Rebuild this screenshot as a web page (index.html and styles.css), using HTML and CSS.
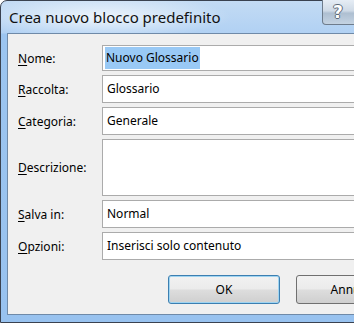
FILE: index.html
```html
<!DOCTYPE html>
<html lang="it">
<head>
    <meta charset="UTF-8" />
    <title>Crea nuovo blocco predefinito</title>
    <link rel="stylesheet" href="styles.css">
</head>
<body>

<div class="window">
    <div class="titlebar">
        <span class="title">Crea nuovo blocco predefinito</span>
        <span class="help-btn">?</span>
    </div>

    <div class="client">
        <div class="form-row">
            <label for="nome"><u>N</u>ome:</label>
            <div class="field field-short" id="nome"><span class="selected">Nuovo Glossario</span></div>
        </div>
        <div class="form-row">
            <label for="raccolta"><u>R</u>accolta:</label>
            <div class="field" id="raccolta">Glossario</div>
        </div>
        <div class="form-row">
            <label for="categoria"><u>C</u>ategoria:</label>
            <div class="field" id="categoria">Generale</div>
        </div>
        <div class="form-row">
            <label for="descrizione"><u>D</u>escrizione:</label>
            <div class="field field-tall" id="descrizione"></div>
        </div>
        <div class="form-row">
            <label for="salva"><u>S</u>alva in:</label>
            <div class="field" id="salva">Normal</div>
        </div>
        <div class="form-row">
            <label for="opzioni"><u>O</u>pzioni:</label>
            <div class="field" id="opzioni">Inserisci solo contenuto</div>
        </div>

        <div class="buttons">
            <button class="btn btn-default">OK</button>
            <button class="btn">Annulla</button>
        </div>
    </div>
</div>

</body>
</html>
```

FILE: styles.css
```css
body {
    margin: 0;
    width: 354px;
    height: 323px;
    overflow: hidden;
    font-family: 'Noto Sans', 'Open Sans', sans-serif;
    color: #000;
}
.window {
    width: 430px;
    height: 321px;
    border: 1px solid #3a4250;
    border-radius: 7px 7px 0 0;
    background:
        radial-gradient(ellipse 130px 22px at 100px 16px, rgba(255,255,255,0.75), rgba(255,255,255,0) 100%),
        linear-gradient(to bottom, #c3dbf4 0px, #b1d1f3 32px, #9cc5f0 33px, #98c2ef 100%);
    display: flex;
    flex-direction: column;
}
.titlebar {
    height: 32px;
    display: flex;
    align-items: flex-start;
}
.title {
    width: 313px;
    padding-left: 8px;
    padding-top: 6px;
    font-size: 15px;
    color: #111;
}
.help-btn {
    width: 40px;
    height: 24px;
    margin-top: -1px;
    border: 1px solid #6e7c8c;
    border-top: none;
    border-radius: 0 0 0 4px;
    background: linear-gradient(to bottom, #e6edf5 0%, #cfdae6 45%, #aebfd1 55%, #c4d3e2 100%);
    color: #fff;
    font-family: 'DejaVu Sans', sans-serif;
    font-weight: bold;
    font-size: 17px;
    line-height: 24px;
    padding-left: 10px;
    text-shadow: -1px 0 #5d6a78, 1px 0 #5d6a78, 0 -1px #5d6a78, 0 1px #5d6a78;
}
.client {
    margin: 0 7px 7px 6px;
    flex: 1;
    border: 1px solid #6f8aa8;
    background: #f0f0f0;
    padding: 11px 0 0 10px;
    display: flex;
    flex-direction: column;
    gap: 4px;
}
.form-row {
    display: flex;
    align-items: center;
}
label {
    width: 84px;
    flex-shrink: 0;
    font-size: 12px;
}
label u {
    text-decoration-thickness: 1px;
    text-underline-offset: 2px;
}
.field {
    flex: 1;
    height: 28px;
    box-sizing: border-box;
    border: 1px solid #ababab;
    background: #fff;
    font-size: 12px;
    line-height: 26px;
    padding-left: 4px;
}
.field-short {
    height: 26px;
    line-height: 24px;
    padding-left: 2px;
}
.field-tall {
    height: 57px;
}
.selected {
    background: #99c9f5;
    padding: 2px 1px 3px 1px;
}
.buttons {
    margin-top: 11px;
    padding-left: 150px;
    display: flex;
    gap: 16px;
}
.btn {
    width: 112px;
    height: 29px;
    flex-shrink: 0;
    border: 1px solid #707070;
    border-radius: 3px;
    background: linear-gradient(to bottom, #f2f2f2 0%, #ebebeb 48%, #dddddd 52%, #cfcfcf 100%);
    font-family: 'Noto Sans', 'Open Sans', sans-serif;
    font-size: 12px;
    color: #000;
    padding: 0;
}
.btn-default {
    border-color: #3c7fb1;
    box-shadow: inset 0 0 0 1px #9fd4f1;
}
```
